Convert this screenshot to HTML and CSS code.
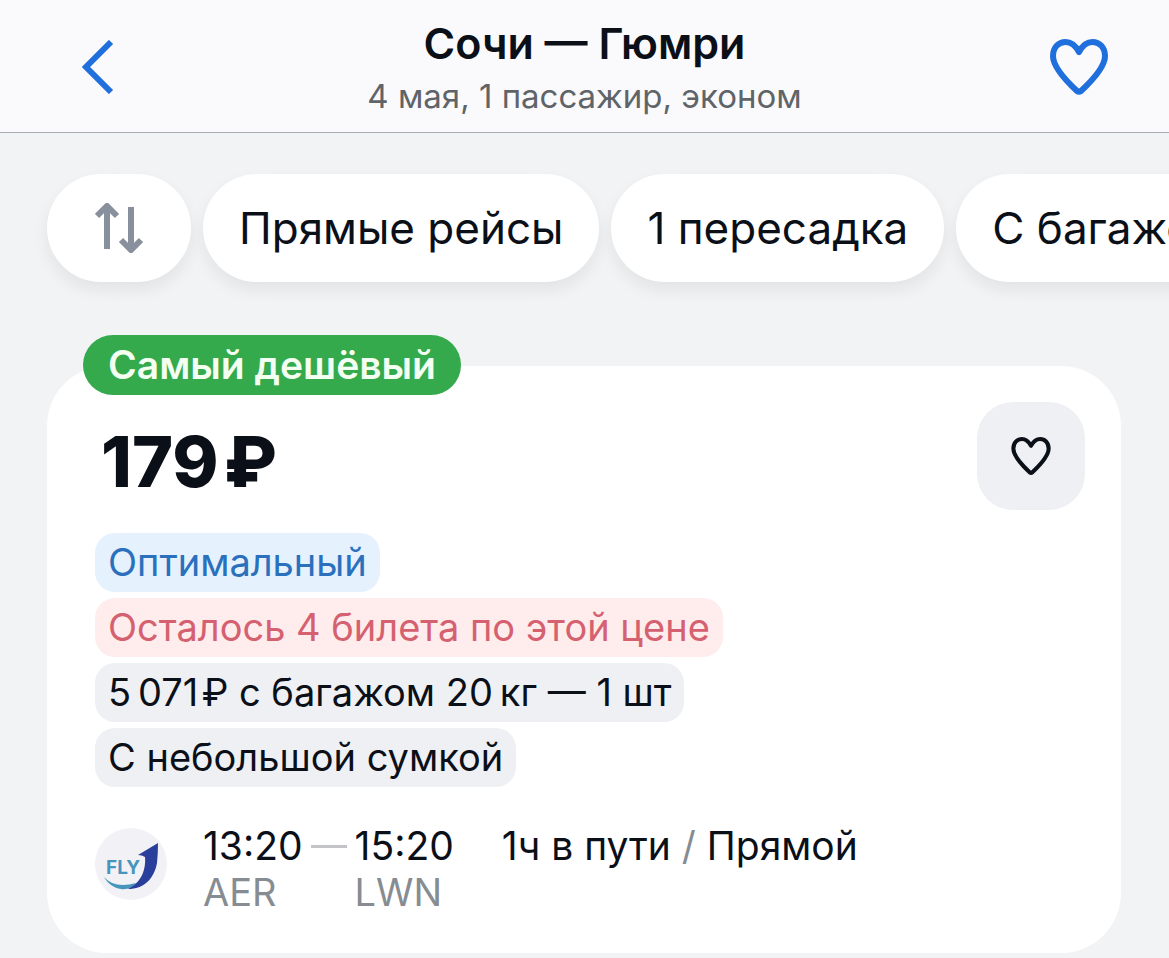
FILE: index.html
```html
<!DOCTYPE html>
<html lang="ru">
<head>
<meta charset="utf-8">
<meta name="viewport" content="width=device-width, initial-scale=1">
<title>Сочи — Гюмри</title>
<link rel="stylesheet" href="styles.css">
</head>
<body>
<header class="topbar">
  <button class="icon-button" type="button" aria-label="Назад">
    <svg class="back-icon" viewBox="0 0 32 54" aria-hidden="true"><path d="M29 2 L4 27 L29 52"/></svg>
  </button>
  <div class="heading">
    <h1 class="title">Сочи — Гюмри</h1>
    <p class="subtitle">4 мая, 1 пассажир, эконом</p>
  </div>
  <button class="icon-button icon-button-end" type="button" aria-label="В избранное">
    <svg class="heart heart-large" viewBox="0 0 58 56" aria-hidden="true"><path d="M29 13 C25.500 6.500 20.500 3 15.500 3 C8.500 3 3 8.500 3 17 C3 26 12 38 27 52 Q29 53.500 31 52 C46 38 55 26 55 17 C55 8.500 49.500 3 42.500 3 C37.500 3 32.500 6.500 29 13 Z"/></svg>
  </button>
</header>

<main>
  <nav class="filters" aria-label="Фильтры">
    <button class="chip chip-sort" type="button" aria-label="Сортировка">
      <svg class="sort-icon" viewBox="0 0 48 50" aria-hidden="true"><path d="M12 46V4M2 13 12 3 22 13M36 4V46M26 37 36 47 46 37"/></svg>
    </button>
    <button class="chip" type="button">Прямые рейсы</button>
    <button class="chip" type="button">1 пересадка</button>
    <button class="chip" type="button">С багажом</button>
  </nav>

  <article class="ticket">
    <span class="badge">Самый дешёвый</span>
    <div class="ticket-head">
      <h2 class="price">179&#8202;₽</h2>
      <button class="like" type="button" aria-label="Сохранить билет">
        <svg class="heart heart-small" viewBox="0 0 58 56" aria-hidden="true"><path d="M29 13 C25.500 6.500 20.500 3 15.500 3 C8.500 3 3 8.500 3 17 C3 26 12 38 27 52 Q29 53.500 31 52 C46 38 55 26 55 17 C55 8.500 49.500 3 42.500 3 C37.500 3 32.500 6.500 29 13 Z"/></svg>
      </button>
    </div>
    <ul class="tags">
      <li class="tag tag-blue">Оптимальный</li>
      <li class="tag tag-red">Осталось 4 билета по этой цене</li>
      <li class="tag">5&#8201;071&#8202;₽ с багажом 20&#8201;кг — 1 шт</li>
      <li class="tag">С небольшой сумкой</li>
    </ul>
    <section class="flight">
      <svg class="airline" viewBox="0 0 72 72" role="img" aria-label="FLY">
        <circle cx="36" cy="36" r="36" fill="#f2f2f6"/>
        <text class="airline-name" x="11" y="46">FLY</text>
        <path d="M9 49 C16 57 27 59 41 55 C38 59 32 62 26 61 C19 60 13 56 9 49Z" fill="#4795bd"/>
        <path d="M63 15 L43 27 Q47 27 50 29 C51 41 47 54 33 61 C49 61 59 51 62 35 Q63 25 63 15Z" fill="#293f9b"/>
      </svg>
      <div class="route">
        <div class="stop"><time class="time">13:20</time><span class="code">AER</span></div>
        <span class="dash"></span>
        <div class="stop"><time class="time">15:20</time><span class="code">LWN</span></div>
      </div>
      <p class="duration">1ч в пути <span class="slash">/</span> Прямой</p>
    </section>
  </article>
</main>
</body>
</html>
```
FILE: styles.css
```css
* { box-sizing: border-box; }

body {
  margin: 0;
  min-height: 100vh;
  overflow-x: hidden;
  background: #f2f3f5;
  color: #0b1018;
  font-family: Inter, "Noto Sans", sans-serif;
}

button {
  border: 0;
  margin: 0;
  padding: 0;
  font: inherit;
  color: inherit;
  cursor: pointer;
}

h1, h2, p, ul { margin: 0; padding: 0; }

svg { display: block; }

.topbar {
  display: grid;
  grid-template-columns: 1fr auto 1fr;
  align-items: center;
  padding: 15px 52px 14px;
  background: #fafafc;
  border-bottom: 1px solid #a7abae;
}

.icon-button {
  display: grid;
  place-items: center;
  width: 92px;
  height: 76px;
  background: none;
}

.icon-button-end {
  width: 76px;
  justify-self: end;
}

.heading { text-align: center; }

.title {
  margin-bottom: 3px;
  font-size: 43px;
  line-height: 56px;
  font-weight: 600;
}

.subtitle {
  font-size: 33px;
  line-height: 44px;
  color: #5f6468;
}

.back-icon {
  width: 32px;
  height: 54px;
  fill: none;
  stroke: #1f6fdc;
  stroke-width: 6;
}

.heart {
  fill: none;
  stroke-linejoin: round;
}

.heart-large {
  width: 58px;
  height: 56px;
  stroke: #1f6fdc;
  stroke-width: 6;
}

.heart-small {
  width: 40px;
  height: 38px;
  overflow: visible;
  stroke: #0b1018;
  stroke-width: 6;
}

.filters {
  display: flex;
  gap: 12px;
  padding: 41px 0 24px 47px;
  overflow: hidden;
}

.chip {
  flex: none;
  height: 108px;
  padding: 0 36px;
  border-radius: 54px;
  background: #fff;
  box-shadow: 0 8px 16px rgba(20, 24, 30, 0.07);
  font-size: 44px;
  white-space: nowrap;
}

.chip-sort {
  display: grid;
  place-items: center;
  width: 144px;
}

.sort-icon {
  width: 48px;
  height: 50px;
  fill: none;
  stroke: #87909c;
  stroke-width: 6;
}

.ticket {
  position: relative;
  margin: 60px 48px 24px 47px;
  padding: 36px 36px 38px 48px;
  border-radius: 60px;
  background: #fff;
}

.badge {
  position: absolute;
  top: -31px;
  left: 36px;
  padding: 0 25px;
  border-radius: 30px;
  background: #34aa4c;
  color: #f3fff0;
  font-size: 39px;
  line-height: 60px;
  font-weight: 600;
}

.ticket-head {
  display: flex;
  align-items: flex-start;
  justify-content: space-between;
}

.price {
  padding-left: 6px;
  font-size: 70px;
  line-height: 120px;
  font-weight: 800;
}

.like {
  display: grid;
  place-items: center;
  width: 108px;
  height: 108px;
  border-radius: 36px;
  background: #eff0f3;
}

.tags {
  display: flex;
  flex-direction: column;
  align-items: flex-start;
  gap: 6px;
  margin-top: 11px;
  list-style: none;
}

.tag {
  padding: 0 13px;
  border-radius: 20px;
  background: #eff0f3;
  font-size: 38px;
  line-height: 59px;
}

.tag-blue {
  background: #e5f1fd;
  color: #2a70bd;
}

.tag-red {
  background: #ffeded;
  color: #d56170;
}

.flight {
  display: flex;
  align-items: flex-start;
  margin-top: 36px;
}

.airline {
  width: 72px;
  height: 72px;
  margin: 5px 36px 0 0;
}

.airline-name {
  fill: #4795bd;
  font-size: 19px;
  font-weight: 700;
}

.route {
  display: flex;
  gap: 8px;
}

.stop {
  display: flex;
  flex-direction: column;
}

.time, .duration {
  font-size: 39px;
  line-height: 46px;
}

.code {
  font-size: 38px;
  line-height: 46px;
  color: #878c93;
}

.dash {
  width: 36px;
  height: 3px;
  margin-top: 22px;
  background: #c3c4c8;
}

.duration { margin-left: 48px; }

.slash { color: #878c93; }
```
